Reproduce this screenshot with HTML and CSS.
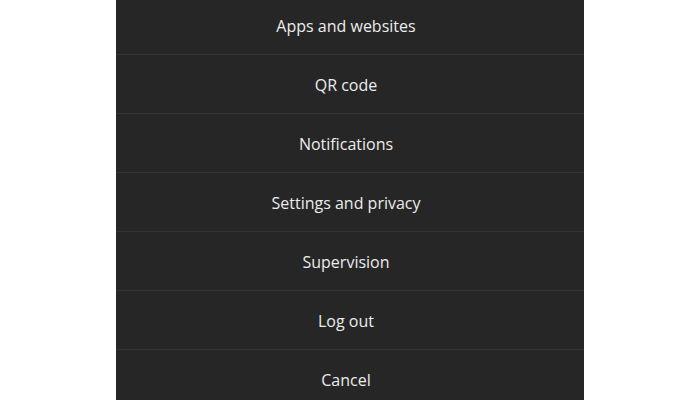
FILE: index.html
```html
<!DOCTYPE html>
<html>
<head>
<meta charset="utf-8">
<link rel="stylesheet" href="styles.css">
</head>
<body>
<div class="sheet">
  <div class="item">Apps and websites</div>
  <div class="item">QR code</div>
  <div class="item">Notifications</div>
  <div class="item">Settings and privacy</div>
  <div class="item">Supervision</div>
  <div class="item">Log out</div>
  <div class="item">Cancel</div>
</div>
</body>
</html>
```
FILE: styles.css
```css
html, body {
  margin: 0;
  padding: 0;
  background: #ffffff;
  overflow: hidden;
}
.sheet {
  width: 468px;
  margin: -4px auto 0;
  background: #262626;
  display: flex;
  flex-direction: column;
}
.item {
  box-sizing: border-box;
  height: 59px;
  padding: 2px 8px 0 0;
  display: flex;
  align-items: center;
  justify-content: center;
  color: #ececec;
  font-family: "Open Sans", "Noto Sans", sans-serif;
  font-size: 16px;
  border-bottom: 1px solid #323232;
}
```
